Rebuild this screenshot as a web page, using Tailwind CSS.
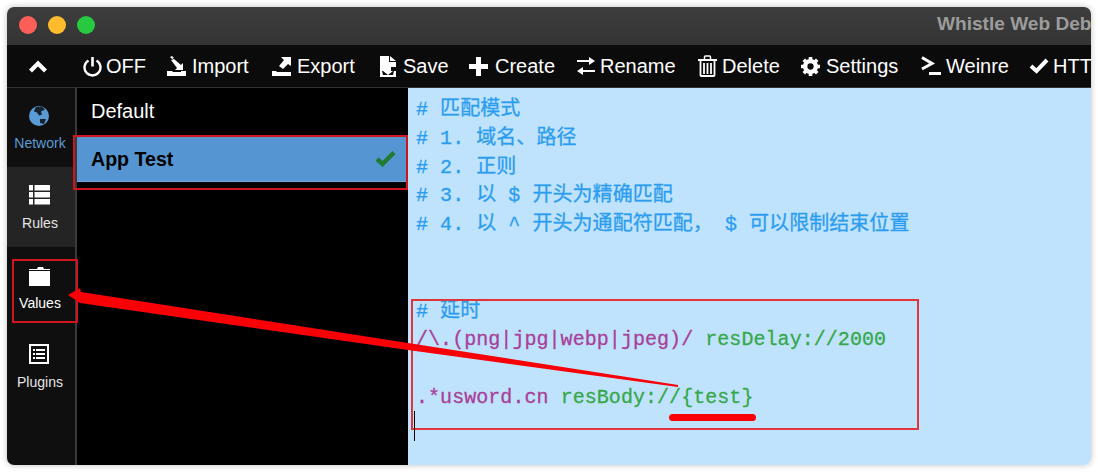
<!DOCTYPE html>
<html><head><meta charset="utf-8"><script src="https://cdn.jsdelivr.net/npm/@tailwindcss/browser@4"></script></head>
<body class="bg-white w-[1098px] h-[472px] overflow-hidden relative font-['Liberation_Sans','Noto_Sans_CJK_SC',sans-serif]">
<div class="absolute left-[7px] top-[7px] w-[1084px] h-[458px] rounded-[7px] overflow-hidden flex flex-col shadow-[0_0_6px_rgba(0,0,0,0.25)]">
  <!-- title bar -->
  <div class="h-[38px] shrink-0 bg-gradient-to-b from-[#3d3d3d] to-[#343434] relative flex items-start pt-[9px] pl-[12px] gap-[11px]">
    <span class="w-[18px] h-[18px] rounded-full bg-[#fc5f57]"></span>
    <span class="w-[18px] h-[18px] rounded-full bg-[#febb2d]"></span>
    <span class="w-[18px] h-[18px] rounded-full bg-[#28c840]"></span>
    <span class="absolute left-[930px] top-[6px] text-[19.100px] leading-[21px] font-bold text-[#9c9c9c] whitespace-nowrap">Whistle Web Deb</span>
  </div>
  <!-- toolbar -->
  <div class="h-[42px] shrink-0 bg-[#0b0b0b] flex items-center text-white text-[20px] whitespace-nowrap overflow-hidden">
    <span class="w-[76px] shrink-0 pl-[22px]">
      <svg width="18" height="13" viewBox="0 0 18 13"><path d="M1.500 11 9 3.500 16.500 11" fill="none" stroke="#fff" stroke-width="4.200"/></svg>
    </span>
    <span class="w-[84px] shrink-0 flex items-center gap-[4px]">
      <svg width="19" height="21" viewBox="0 0 19 21"><path d="M5.500 4.500A8 8 0 1 0 13.500 4.500" fill="none" stroke="#fff" stroke-width="2.400"/><path d="M9.500 1v9.500" stroke="#fff" stroke-width="2.600"/></svg>OFF</span>
    <span class="w-[105px] shrink-0 flex items-center gap-[6px]">
      <svg width="19" height="21" viewBox="0 0 19 21"><path d="M3 1l2-1 2 2-2 1z M4 4l3-1 7 6 2-2v7H8l2-2z" fill="#fff"/><path d="M0 15h5l1 1h8v-1h5v5H0z" fill="#fff"/></svg>Import</span>
    <span class="w-[108px] shrink-0 flex items-center gap-[6px]">
      <svg width="19" height="21" viewBox="0 0 19 21"><path d="M9 1h10v9l-3-2-5 5-4-3 5-6z" fill="#fff"/><path d="M0 15h4l1 1h14v4H0z" fill="#fff"/></svg>Export</span>
    <span class="w-[89px] shrink-0 flex items-center gap-[7px]">
      <svg width="16" height="21" viewBox="0 0 16 21"><path d="M0 0h9v6h7v5h-5v4H0z M10 0l6 5h-6z" fill="#fff"/><path d="M0 15h2l1 4h10l1-4h2v6H0z M6 11h4v4h3l-5 4-5-4h3z" fill="#fff"/></svg>Save</span>
    <span class="w-[107px] shrink-0 flex items-center gap-[7px]">
      <svg width="19" height="19" viewBox="0 0 19 19"><path d="M7 0h5v7h7v5h-7v7H7v-7H0V7h7z" fill="#fff"/></svg>Create</span>
    <span class="w-[122px] shrink-0 flex items-center gap-[5px]">
      <svg width="19" height="18" viewBox="0 0 19 18"><path d="M13 0l6 4-6 4V5H1V3h12z M7 10v3h12v2H7v3l-6-4z" fill="#fff"/></svg>Rename</span>
    <span class="w-[103px] shrink-0 flex items-center gap-[5px]">
      <svg width="19" height="22" viewBox="0 0 19 22"><path d="M0 4h19v2H0z" fill="#fff"/><path d="M6.500 4V2q0-1 1-1h4q1 0 1 1v2" fill="none" stroke="#fff" stroke-width="1.500"/><path d="M2.500 6v14.500q0 .5 1 .5h12q1 0 1-.5V6" fill="none" stroke="#fff" stroke-width="1.800"/><path d="M6 8v11M9.500 8v11M13 8v11" stroke="#fff" stroke-width="1.800"/></svg>Delete</span>
    <span class="w-[120px] shrink-0 flex items-center gap-[6px]">
      <svg width="19" height="19" viewBox="0 0 20 20"><circle cx="10" cy="10" r="6" fill="none" stroke="#fff" stroke-width="4"/><path d="M10 0v20M0 10h20M2.900 2.900l14.200 14.200M17.100 2.900 2.900 17.100" stroke="#fff" stroke-width="3.800"/><circle cx="10" cy="10" r="3.300" fill="#0b0b0b"/></svg>Settings</span>
    <span class="w-[108px] shrink-0 flex items-center gap-[5px]">
      <svg width="20" height="20" viewBox="0 0 20 20"><path d="M1 1.500l10 6L1 13" fill="none" stroke="#fff" stroke-width="3"/><path d="M8 16h12v3H8z" fill="#fff"/></svg>Weinre</span>
    <span class="flex items-center gap-[4px]">
      <svg width="20" height="16" viewBox="0 0 20 16"><path d="M2 8l5.500 5L18 2" fill="none" stroke="#fff" stroke-width="4"/></svg>HTT</span>
  </div>
  <div class="flex-1 flex min-h-0 border-t border-[#333]">
    <!-- sidebar -->
    <div class="w-[70px] shrink-0 bg-[#0f0f0f] border-r-2 border-[#3a3a3a] flex flex-col text-[14px] leading-[16px]">
      <div class="h-[79px] flex flex-col items-center pt-[18px] pr-[2px] gap-[9px] text-[#5b9bd5]">
        <svg class="mr-[2px]" width="20" height="20" viewBox="0 0 20 20"><circle cx="10" cy="10" r="10" fill="#5b9bd5"/><path d="M7 1l6-.500 3 3-4 2 1 3-3 1-2-3-3-1 1-3z M11 13l6 0-2 5-4-1z" fill="#16222e"/></svg>
        <span>Network</span>
      </div>
      <div class="h-[80px] bg-[#242424] flex flex-col items-center pt-[18px] pr-[2px] gap-[10px] text-[#e6e6e6]">
        <svg class="mr-[2px]" width="21" height="20" viewBox="0 0 21 20"><path d="M0 0h4v5.500H0z M5.500 0H21v5.500H5.500z M0 7h4v5.500H0z M5.500 7H21v5.500H5.500z M0 14h4v5.500H0z M5.500 14H21v5.500H5.500z" fill="#fff"/></svg>
        <span>Rules</span>
      </div>
      <div class="h-[79px] flex flex-col items-center pt-[20px] pr-[2px] gap-[8px] text-white">
        <svg class="mr-[2px]" width="21" height="20" viewBox="0 0 21 20"><path d="M0 2h8l1-2h5l1 2h6v1H0z M0 4h21v15H0z" fill="#fff"/></svg>
        <span>Values</span>
      </div>
      <div class="h-[80px] flex flex-col items-center pt-[18px] pr-[2px] gap-[10px] text-[#e6e6e6]">
        <svg class="mr-[2px]" width="20" height="20" viewBox="0 0 20 20"><rect x="1" y="1" width="18" height="18" fill="#0f0f0f" stroke="#fff" stroke-width="2"/><path d="M4 5h2v2H4z M7 5h9v2H7z M4 9h2v2H4z M7 9h9v2H7z M4 13h2v2H4z M7 13h9v2H7z" fill="#fff"/></svg>
        <span>Plugins</span>
      </div>
    </div>
    <!-- list -->
    <div class="w-[331px] shrink-0 bg-black text-[20px] leading-[24px]">
      <div class="h-[47px] pl-[14px] pt-[11px] text-white">Default</div>
      <div class="h-[47px] bg-[#5596d2] pl-[14px] pr-[12px] pt-[1px] flex items-center justify-between font-bold text-[19.600px] text-black border-b border-[#6ea6da]">
        <span>App Test</span>
        <svg width="21" height="17" viewBox="0 0 21 17"><path d="M2 9l5.500 5L19 2.500" fill="none" stroke="#1f7a33" stroke-width="4.500"/></svg>
      </div>
    </div>
    <!-- editor -->
    <div class="flex-1 bg-[#c0e3fd] pl-[8px] pt-[8px] text-[20px] leading-[28.800px] tracking-[0.05px] [-webkit-text-stroke:0.3px] font-['Liberation_Mono','Noto_Sans_CJK_SC',monospace]">
      <div class="whitespace-pre text-[#2b9df0]"># 匹配模式</div>
      <div class="whitespace-pre text-[#2b9df0]"># 1. 域名、路径</div>
      <div class="whitespace-pre text-[#2b9df0]"># 2. 正则</div>
      <div class="whitespace-pre text-[#2b9df0]"># 3. 以 $ 开头为精确匹配</div>
      <div class="whitespace-pre text-[#2b9df0]"># 4. 以 ^ 开头为通配符匹配， $ 可以限制结束位置</div>
      <div>&nbsp;</div>
      <div>&nbsp;</div>
      <div class="whitespace-pre text-[#2b9df0]"># 延时</div>
      <div class="whitespace-pre"><span class="text-[#a8409a]">/\.(png|jpg|webp|jpeg)/</span> <span class="text-[#36a84a]">resDelay://2000</span></div>
      <div>&nbsp;</div>
      <div class="whitespace-pre"><span class="text-[#a8409a]">.*usword.cn</span> <span class="text-[#36a84a]">resBody://{test}</span></div>
    </div>
  </div>
</div>
<!-- annotations -->
<div class="absolute left-[73px] top-[135px] w-[335px] h-[55px] border-2 border-[#d0161c]"></div>
<div class="absolute left-[12px] top-[259px] w-[66px] h-[64px] border-2 border-[#d0161c]"></div>
<div class="absolute left-[411px] top-[299px] w-[508px] h-[131px] border-2 border-[#e0353c]"></div>
<div class="absolute left-[414px] top-[411px] w-[1px] h-[30px] bg-black"></div>
<div class="absolute left-[669px] top-[414px] w-[87px] h-[7px] rounded-full bg-[#f90006]"></div>
<svg class="absolute left-0 top-0" width="1098" height="472" viewBox="0 0 1098 472"><path d="M68 295 80 288 81 292 408 343 678 385 678 387 408 350 80 303z" fill="#f90006"/></svg>
</body></html>
